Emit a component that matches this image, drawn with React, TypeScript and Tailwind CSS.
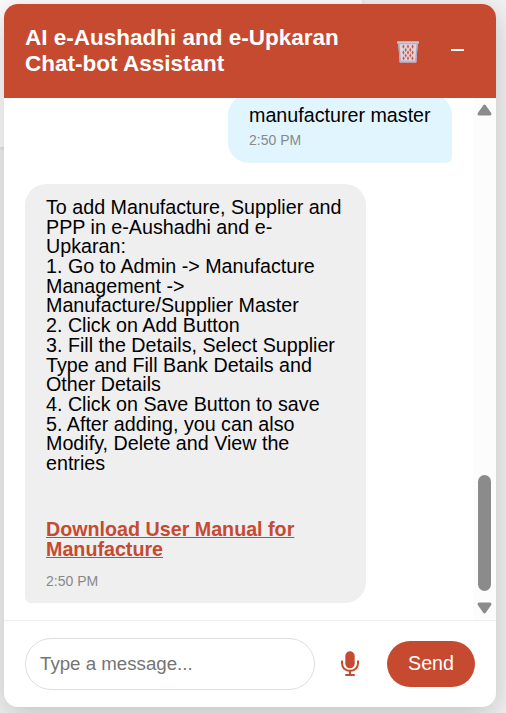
import React from "react";

const STEPS = [
  "To add Manufacture, Supplier and PPP in e-Aushadhi and e-Upkaran:",
  "1. Go to Admin -> Manufacture Management -> Manufacture/Supplier Master",
  "2. Click on Add Button",
  "3. Fill the Details, Select Supplier Type and Fill Bank Details and Other Details",
  "4. Click on Save Button to save",
  "5. After adding, you can also Modify, Delete and View the entries",
];

const HOLES = [
  [7.4, 6.6], [12, 6.6], [16.6, 6.6],
  [9.7, 9.9], [14.3, 9.9],
  [7.4, 12.6], [12, 12.6], [16.6, 12.6],
  [9.7, 15.5], [14.3, 15.5],
  [7.6, 18.3], [12, 18.3], [16.4, 18.3],
];

function BinIcon() {
  return (
    <svg viewBox="0 0 24 24" className="h-6 w-6" fill="none">
      <path d="M2.200 2.500 3.600 21.500h16.800l1.400-19Z" fill="#dcd5e1" />
      {HOLES.map(([x, y]) => (
        <path
          key={`${x}-${y}`}
          d={`M${x} ${y - 2.1}l1.150 2.100-1.150 2.100-1.150-2.100Z`}
          fill="#cf5a45"
        />
      ))}
      <path d="m2.800 4 1.500 17M21.200 4l-1.500 17" stroke="#aaa5bf" strokeWidth="1.300" />
      <rect x="1" y="1.200" width="22" height="2.500" rx="1" fill="#cac9d9" />
      <path d="M2 3.700h20" stroke="#a49cb3" strokeWidth=".7" />
      <rect x="3.400" y="20.500" width="17.200" height="2.300" rx=".8" fill="#bcb8cf" />
    </svg>
  );
}

function MicIcon() {
  return (
    <svg viewBox="0 0 18 26" className="h-[26px] w-[18px]" fill="none">
      <rect x="4.300" y="0.300" width="9.400" height="17" rx="4.700" fill="#c64a2f" />
      <path d="M1 9.500v2.700c0 4.500 3.400 7.600 8 7.600s8-3.100 8-7.600V9.500" stroke="#c64a2f" strokeWidth="2" />
      <path d="M9 19.500v4" stroke="#c64a2f" strokeWidth="2.200" />
      <rect x="4.200" y="22.900" width="9.600" height="2.200" rx=".7" fill="#c64a2f" />
    </svg>
  );
}

function Header() {
  return (
    <header className="flex h-[94px] shrink-0 items-center bg-[#c64a2f] pl-[21px] text-white">
      <h1 className="w-[340px] text-[22.5px] leading-[26px] font-bold">
        AI e-Aushadhi and e-Upkaran Chat-bot Assistant
      </h1>
      <button className="mt-[2px] ml-[31px]" aria-label="Clear chat">
        <BinIcon />
      </button>
      <button className="-mt-[2px] ml-[31px] h-[2px] w-[13px] bg-white" aria-label="Minimize" />
    </header>
  );
}

function Scrollbar() {
  return (
    <div className="flex w-[23px] shrink-0 flex-col items-center bg-[#fcfcfc] pt-[6px] pb-[6px]">
      <svg viewBox="0 0 15 12" className="h-3 w-[15px]">
        <path d="M6.300 1.200Q7.500 0 8.700 1.200L14.200 9Q15 11.500 13 11.500H2Q0 11.500.8 9Z" fill="#8b8b8b" />
      </svg>
      <div className="mt-[359px] h-[116px] w-[13px] rounded-full bg-[#8b8b8b]" />
      <svg viewBox="0 0 15 12" className="mt-auto h-3 w-[15px] rotate-180">
        <path d="M6.300 1.200Q7.500 0 8.700 1.200L14.200 9Q15 11.500 13 11.500H2Q0 11.500.8 9Z" fill="#8b8b8b" />
      </svg>
    </div>
  );
}

export default function App() {
  return (
    <div
      className="h-[713px] w-[506px] overflow-hidden bg-[#f1f1f1] p-1"
      style={{ fontFamily: '"Liberation Sans", Arial, sans-serif' }}
    >
      <div className="-mt-1 -ml-1 h-[147px] w-[362px] bg-[#fcfcfc] shadow-[0_1px_4px_rgba(0,0,0,0.12)]" />
      <main className="relative -mt-[143px] flex h-[703px] w-[492px] flex-col overflow-hidden rounded-[14px] bg-white shadow-[0_8px_30px_rgba(0,0,0,0.2)]">
        <Header />
        <section className="flex h-[522px] shrink-0 overflow-hidden">
          <div className="flex flex-1 flex-col overflow-hidden pl-[21px]">
            <div className="-mt-[4px] mr-[21px] h-[69px] w-[224px] shrink-0 self-end rounded-[21px] rounded-br-[6px] bg-[#e1f5fe] pt-[12px] pl-[21px]">
              <p className="text-[19.69px] leading-[19.69px] text-black">manufacturer master</p>
              <time className="mt-[7px] block text-[14px] leading-[14px] text-[#888]">2:50 PM</time>
            </div>
            <div className="mt-[21px] h-[419px] w-[341px] shrink-0 rounded-[21px] rounded-bl-[6px] bg-[#efefef] px-[21px] pt-[14px]">
              <div className="text-[19.69px] leading-[19.69px] text-black">
                {STEPS.map((step) => (
                  <p key={step}>{step}</p>
                ))}
              </div>
              <a className="mt-[46.4px] block text-[19.69px] leading-[19.69px] font-bold text-[#c64a2f] underline">
                Download User Manual for Manufacture
              </a>
              <time className="mt-[14.4px] block text-[14px] leading-[14px] text-[#888]">2:50 PM</time>
            </div>
          </div>
          <Scrollbar />
        </section>
        <footer className="flex flex-1 items-center border-t border-[#eee] pl-[21px]">
          <input
            className="h-[52px] w-[290px] rounded-full border border-[#ddd] px-[14px] text-[18.7px] placeholder:text-[#757575]"
            placeholder="Type a message..."
          />
          <button className="ml-[26px]" aria-label="Voice input">
            <MicIcon />
          </button>
          <button className="ml-[28px] h-[46px] w-[88px] rounded-full bg-[#c64a2f] pb-px text-[19.69px] text-white">
            Send
          </button>
        </footer>
      </main>
    </div>
  );
}
